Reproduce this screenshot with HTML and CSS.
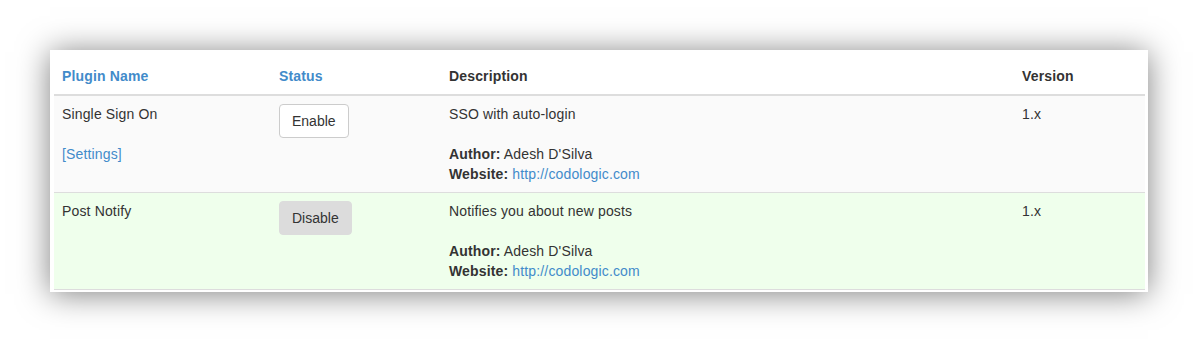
FILE: index.html
```html
<!DOCTYPE html>
<html lang="en">
<head>
    <meta charset="UTF-8">
    <meta name="viewport" content="width=device-width, initial-scale=1.0">
    <title>Plugins</title>
    <link rel="stylesheet" href="styles.css">
</head>
<body>
    <div class="panel">
        <table class="plugins">
            <thead>
                <tr>
                    <th class="col-name"><a href="#">Plugin Name</a></th>
                    <th class="col-status"><a href="#">Status</a></th>
                    <th class="col-desc">Description</th>
                    <th class="col-version">Version</th>
                </tr>
            </thead>
            <tbody>
                <tr class="row-off">
                    <td>
                        Single Sign On<br><br>
                        <a href="#">[Settings]</a>
                    </td>
                    <td><button class="btn">Enable</button></td>
                    <td>
                        SSO with auto-login<br><br>
                        <b>Author:</b> Adesh D'Silva<br>
                        <b>Website:</b> <a href="#">http://codologic.com</a>
                    </td>
                    <td>1.x</td>
                </tr>
                <tr class="row-on">
                    <td>Post Notify</td>
                    <td><button class="btn btn-active">Disable</button></td>
                    <td>
                        Notifies you about new posts<br><br>
                        <b>Author:</b> Adesh D'Silva<br>
                        <b>Website:</b> <a href="#">http://codologic.com</a>
                    </td>
                    <td>1.x</td>
                </tr>
            </tbody>
        </table>
    </div>
</body>
</html>
```

FILE: styles.css
```css
* {
    margin: 0;
    padding: 0;
    box-sizing: border-box;
    font-family: "Liberation Sans", Arial, sans-serif;
}

body {
    background: #fff;
    color: #333;
    font-size: 14px;
    line-height: 20px;
    letter-spacing: 0.15px;
    padding: 50px;
}

a {
    color: #428bca;
    text-decoration: none;
}

.panel {
    width: 1098px;
    height: 242px;
    background: #fff;
    padding: 8px 3px 0 4px;
    box-shadow: 0 2px 30px rgba(0, 0, 0, 0.5);
}

.plugins {
    width: 1091px;
    border-collapse: collapse;
    border-bottom: 1px solid #ddd;
}

.plugins th {
    text-align: left;
    font-weight: bold;
    padding: 8px;
    border-bottom: 2px solid #ddd;
}

.plugins td {
    vertical-align: top;
    padding: 8px;
    border-top: 1px solid #ddd;
}

.col-name {
    width: 217px;
}

.col-status {
    width: 170px;
}

.col-desc {
    width: 573px;
}

.row-off {
    background: #fafafa;
}

.row-on {
    background: #efffec;
}

.btn {
    font-size: 14px;
    line-height: 20px;
    padding: 6px 12px;
    color: #333;
    background: #fff;
    border: 1px solid #ccc;
    border-radius: 4px;
    cursor: pointer;
}

.btn-active {
    background: #dcdcdc;
    border-color: #dcdcdc;
}
```
